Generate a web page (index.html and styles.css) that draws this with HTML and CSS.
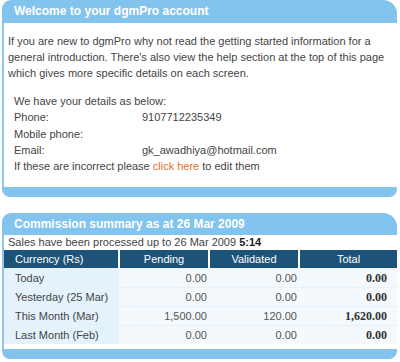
FILE: index.html
```html
<!DOCTYPE html>
<html lang="en">
<head>
  <meta charset="UTF-8" />
  <title>dgmPro account</title>
  <link rel="stylesheet" href="styles.css">
</head>
<body>
  <div class="panel welcome">
    <div class="panel-head">Welcome to your dgmPro account</div>
    <div class="panel-body">
      <p class="intro">If you are new to dgmPro why not read the getting started information for a general introduction. There's also view the help section at the top of this page which gives more specific details on each screen.</p>
      <div class="details">
        <div class="row">We have your details as below:</div>
        <div class="row"><span class="label">Phone:</span><span>9107712235349</span></div>
        <div class="row"><span class="label">Mobile phone:</span><span></span></div>
        <div class="row"><span class="label">Email:</span><span>gk_awadhiya@hotmail.com</span></div>
        <div class="row">If these are incorrect please <a href="#">click here</a> to edit them</div>
      </div>
    </div>
    <div class="panel-foot"></div>
  </div>

  <div class="panel commission">
    <div class="panel-head">Commission summary as at 26 Mar 2009</div>
    <div class="panel-body">
      <div class="processed">Sales have been processed up to 26 Mar 2009 <b>5:14</b></div>
      <table class="summary">
        <thead>
          <tr>
            <th class="name">Currency (Rs)</th>
            <th>Pending</th>
            <th>Validated</th>
            <th class="total">Total</th>
          </tr>
        </thead>
        <tbody>
          <tr><td class="name">Today</td><td>0.00</td><td>0.00</td><td class="total">0.00</td></tr>
          <tr><td class="name">Yesterday (25 Mar)</td><td>0.00</td><td>0.00</td><td class="total">0.00</td></tr>
          <tr><td class="name">This Month (Mar)</td><td>1,500.00</td><td>120.00</td><td class="total">1,620.00</td></tr>
          <tr><td class="name">Last Month (Feb)</td><td>0.00</td><td>0.00</td><td class="total">0.00</td></tr>
        </tbody>
      </table>
    </div>
    <div class="panel-foot"></div>
  </div>
</body>
</html>
```

FILE: styles.css
```css
body {
  margin: 0;
  padding: 0 3px 0 2px;
  background: #fff;
  font-family: 'Liberation Sans', Arial, sans-serif;
  font-size: 11px;
  color: #444;
}
.panel {
  margin-bottom: 16px;
}
.panel:last-child {
  margin-bottom: 0;
}
.panel-head {
  background: #82c4ee;
  color: #fff;
  font-weight: bold;
  font-size: 12px;
  height: 23px;
  line-height: 23px;
  padding-left: 12px;
  border-radius: 9px 14px 0 0;
}
.commission .panel-head {
  height: 22px;
  line-height: 22px;
}
.panel-body {
  border-left: 2px solid #8cc6ee;
}
.panel-foot {
  background: #82c4ee;
  height: 10px;
  border-radius: 0 0 8px 8px;
}
.welcome .panel-body {
  padding: 10px 6px 13px 4px;
}
.intro {
  margin: 0 0 12px;
  line-height: 16px;
}
.details {
  padding-left: 6px;
}
.details .row {
  line-height: 16px;
  display: flex;
}
.details .row + .row {
  margin-top: 0.3px;
}
.label {
  width: 128px;
}
.details a {
  color: #e0702c;
  text-decoration: none;
  margin: 0 3px;
}
.commission .panel-body {
  padding-bottom: 5px;
}
.processed {
  padding-left: 4px;
  line-height: 15px;
}
.processed b {
  color: #222;
}
.summary {
  width: 100%;
  border-collapse: collapse;
  table-layout: fixed;
  margin-top: 0;
}
.summary th {
  background: #1d5379;
  color: #fff;
  font-weight: normal;
  height: 18px;
  padding: 0;
  border-left: 2px solid #fff;
  text-align: center;
  width: 88px;
}
.summary th.name {
  border-left: none;
  text-align: left;
  padding-left: 11px;
  width: 103px;
}
.summary th.total {
  width: auto;
}
.summary td {
  height: 18px;
  padding: 0 2px 0 0;
  text-align: right;
  background: #f4f9fd;
  border-top: 1px solid #e6f1f9;
  color: #555;
}
.summary td.name {
  background: #e4f2fc;
  text-align: left;
  padding-left: 11px;
  color: #444;
}
.summary td.total {
  font-family: 'Liberation Serif', 'Times New Roman', serif;
  font-weight: bold;
  font-size: 12px;
  color: #333;
  padding-right: 10px;
}
```
